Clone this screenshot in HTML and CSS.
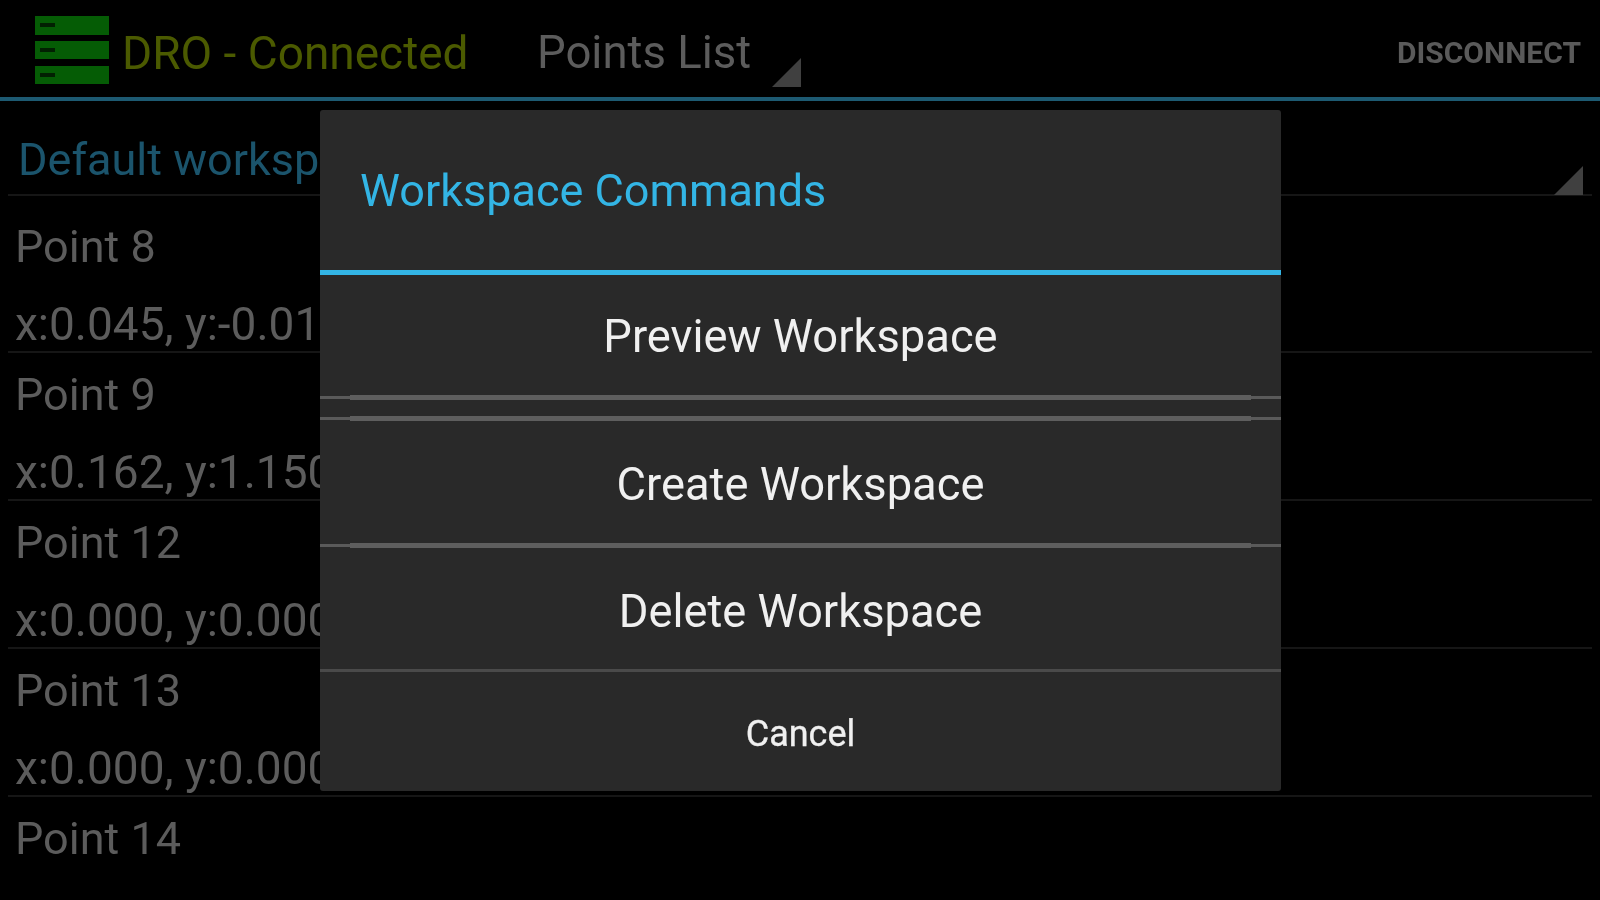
FILE: index.html
```html
<!DOCTYPE html>
<html lang="en">
<head>
    <meta charset="UTF-8">
    <title>DRO - Connected</title>
    <link rel="stylesheet" href="styles.css">
</head>
<body>
    <div class="action-bar">
        <svg class="logo" width="76" height="70" viewBox="0 0 76 70">
            <path fill="#055c05" d="M1 0h74v19H1zM1 25h74v18H1zM1 50h74v18H1z"/>
            <path fill="#022002" d="M6 7h15v4H6zM6 32h15v4H6zM6 57h15v4H6z"/>
        </svg>
        <span class="status">DRO - Connected</span>
        <div class="nav-spinner">
            <span class="nav-label">Points List</span>
            <span class="corner"></span>
        </div>
        <span class="disconnect">DISCONNECT</span>
    </div>
    <div class="content">
        <div class="workspace-spinner">
            <span class="workspace-name">Default workspace</span>
            <span class="corner corner-small"></span>
        </div>
        <div class="points">
            <div class="point">
                <div class="point-name">Point 8</div>
                <div class="point-coords">x:0.045, y:-0.012</div>
            </div>
            <div class="point">
                <div class="point-name">Point 9</div>
                <div class="point-coords">x:0.162, y:1.150</div>
            </div>
            <div class="point">
                <div class="point-name">Point 12</div>
                <div class="point-coords">x:0.000, y:0.000</div>
            </div>
            <div class="point">
                <div class="point-name">Point 13</div>
                <div class="point-coords">x:0.000, y:0.000</div>
            </div>
            <div class="point">
                <div class="point-name">Point 14</div>
            </div>
        </div>
    </div>
    <div class="dialog">
        <div class="dialog-title">Workspace Commands</div>
        <div class="command command-first">Preview Workspace</div>
        <div class="command command-second">Create Workspace</div>
        <div class="command command-third">Delete Workspace</div>
        <div class="cancel">Cancel</div>
    </div>
</body>
</html>
```

FILE: styles.css
```css
html, body {
    height: 100%;
}
html {
    background-color: #000;
}
body {
    margin: 0;
    background-color: #000;
    font-family: Roboto, "Liberation Sans", sans-serif;
    overflow: hidden;
    position: relative;
    filter: blur(0.6px);
}
.action-bar {
    height: 101px;
    box-sizing: border-box;
    border-bottom: 4px solid #1d5a72;
    display: flex;
    align-items: center;
    padding: 8px 19px 0 34px;
}
.logo {
    margin-bottom: 3px;
    margin-right: 12px;
}
.status {
    font-size: 46px;
    color: #4b5a00;
    width: 415px;
}
.nav-spinner {
    width: 264px;
    height: 86px;
    position: relative;
    display: flex;
    align-items: center;
}
.nav-label {
    font-size: 45.5px;
    color: #5c5c5c;
}
.corner {
    position: absolute;
    right: 0;
    bottom: 9px;
    width: 0;
    height: 0;
    border-style: solid;
    border-width: 0 0 29px 29px;
    border-color: transparent transparent #404040 transparent;
}
.corner-small {
    right: 9px;
    bottom: -1px;
}
.disconnect {
    margin-left: auto;
    font-size: 30px;
    font-weight: 700;
    color: #5a5a5a;
}
.content {
    padding: 0 8px;
}
.workspace-spinner {
    height: 95px;
    box-sizing: border-box;
    border-bottom: 2px solid #161616;
    position: relative;
    display: flex;
    align-items: center;
    padding-left: 10px;
    padding-top: 24px;
}
.workspace-name {
    font-size: 45px;
    color: #1b546c;
}
.points {
    margin-top: 9px;
}
.point {
    height: 148px;
    box-sizing: border-box;
    border-bottom: 2px solid #161616;
    color: #5c5c5c;
    font-size: 45px;
    padding-left: 7px;
}
.point:last-child {
    border-bottom: none;
}
.point-name {
    height: 74px;
    padding-top: 15px;
    box-sizing: border-box;
    line-height: 54px;
}
.point-coords {
    font-size: 46px;
    line-height: 54px;
    padding-top: 18px;
    white-space: nowrap;
}
.dialog {
    position: absolute;
    left: 320px;
    top: 110px;
    width: 961px;
    height: 681px;
    box-sizing: border-box;
    background-color: #292929;
    border-radius: 3px;
    color: #f0f0f0;
    text-align: center;
}
.dialog-title {
    height: 165px;
    box-sizing: border-box;
    border-bottom: 5px solid #33b5e5;
    padding-left: 40px;
    text-align: left;
    font-size: 45px;
    line-height: 162px;
    color: #33b5e5;
}
.command {
    font-size: 45.3px;
    position: relative;
    box-sizing: border-box;
    line-height: 54px;
}
.command::after {
    content: "";
    position: absolute;
    left: 30px;
    right: 30px;
    bottom: -4px;
    height: 5px;
    background-color: #5e5e5e;
}
.command-first {
    height: 124px;
    padding-top: 35px;
    border-bottom: 3px solid #5a5a5a;
}
.command-second {
    height: 130px;
    margin-top: 18px;
    border-top: 3px solid #5a5a5a;
    border-bottom: 3px solid #5a5a5a;
    padding-top: 38px;
}
.command-second::before {
    content: "";
    position: absolute;
    left: 30px;
    right: 30px;
    top: -4px;
    height: 5px;
    background-color: #5e5e5e;
}
.command-third {
    height: 122px;
    padding-top: 38px;
}
.command-third::after {
    display: none;
}
.cancel {
    border-top: 3px solid #4a4a4a;
    font-size: 36px;
    line-height: 125px;
    -webkit-text-stroke: 0.3px #f0f0f0;
}
```
